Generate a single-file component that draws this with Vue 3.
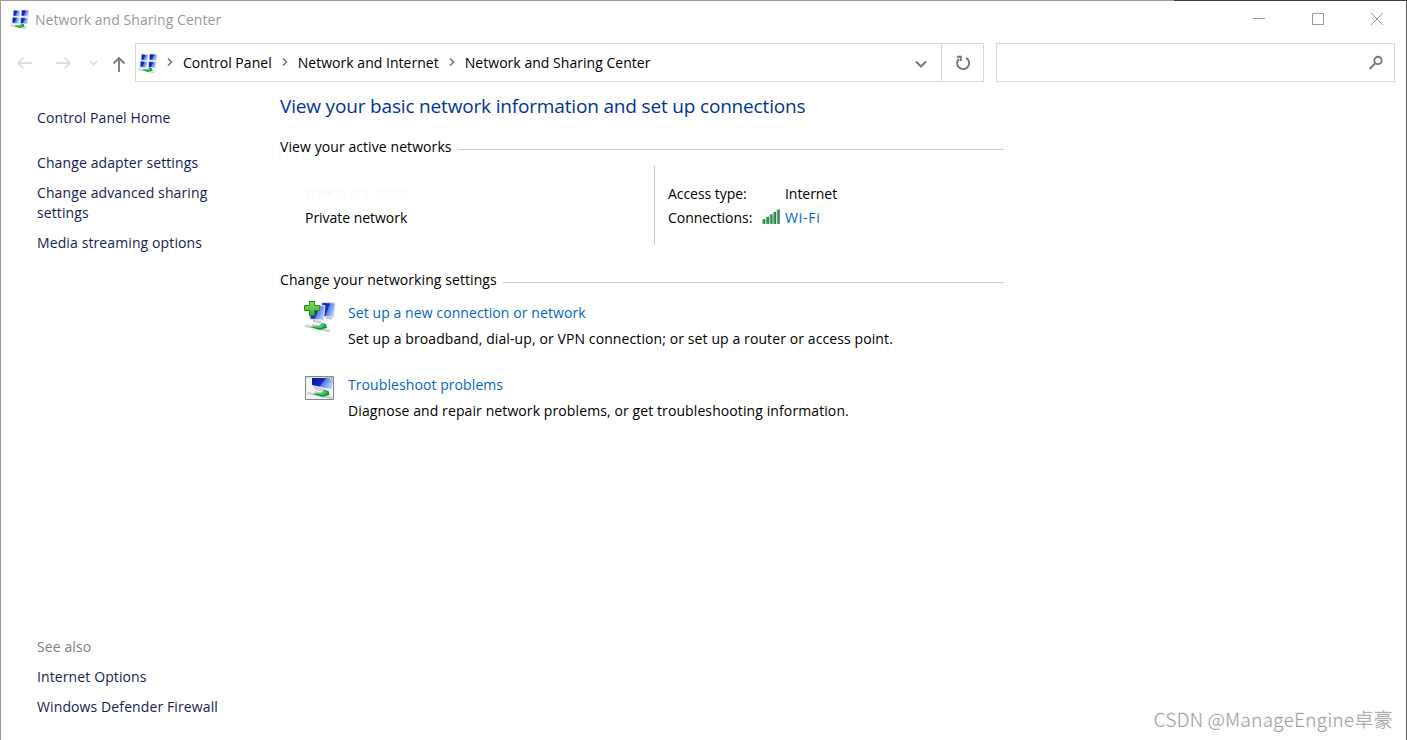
<template>
  <div class="window">
    <div class="backdrop-edge"></div>
    <header class="titlebar">
      <svg class="app-icon" viewBox="0 0 20 20"><use href="#network" /></svg>
      <span class="title">Network and Sharing Center</span>
      <div class="controls">
        <svg viewBox="0 0 14 14"><path d="M1 6.5h12" /></svg>
        <svg viewBox="0 0 14 14"><path d="M1.5 1.5h11v11h-11z" /></svg>
        <svg viewBox="0 0 14 14"><path d="M1 1l12 12M13 1L1 13" /></svg>
      </div>
    </header>

    <nav class="toolbar">
      <svg class="nav-icons" viewBox="0 0 116 20">
        <path d="M6 10h14M11.500 4.500L6 10l5.500 5.500M44 10h14M52.500 4.500L58 10l-5.500 5.500" />
        <path d="M78 8l3.500 3.500L85 8" />
        <path class="up" d="M107 19V5M101.500 10.500L107 5l5.500 5.500" />
      </svg>
      <div class="address">
        <svg class="app-icon" viewBox="0 0 20 20"><use href="#network" /></svg>
        <template v-for="crumb in crumbs" :key="crumb">
          <svg class="chevron" viewBox="0 0 8 10"><path d="M2 1.500L5.500 5 2 8.500" /></svg>
          <span class="crumb">{{ crumb }}</span>
        </template>
        <svg class="dropdown" viewBox="0 0 12 8"><path d="M1 1.500l5 5 5-5" /></svg>
        <div class="refresh">
          <svg viewBox="0 0 16 16"><path d="M11 2.800A6 6 0 1 1 3.800 4M2 1.700H5.800V6" /></svg>
        </div>
      </div>
      <div class="search">
        <svg viewBox="0 0 16 16"><circle cx="10" cy="5.500" r="3.700" /><path d="M7.300 8.300L1.500 14" /></svg>
      </div>
    </nav>

    <div class="content">
      <aside class="sidebar">
        <a class="home">Control Panel Home</a>
        <a v-for="task in tasks" :key="task">{{ task }}</a>
        <span class="see-also">See also</span>
        <a v-for="link in related" :key="link">{{ link }}</a>
      </aside>

      <main>
        <h1>View your basic network information and set up connections</h1>
        <h2><span>View your active networks</span></h2>
        <section class="network">
          <div class="network-name">
            <b>OPPO A5 2020</b>
            <span>Private network</span>
          </div>
          <dl>
            <dt>Access type:</dt>
            <dd>Internet</dd>
            <dt>Connections:</dt>
            <dd>
              <svg class="signal" viewBox="0 0 18 15">
                <rect v-for="n in 5" :key="n" :x="(n - 1) * 3.6 + 0.3" :y="12.5 - n * 2.4" width="3" :height="2.4 + n * 2.4" fill="url(#bars)" />
              </svg>
              <a class="wifi">Wi-Fi</a>
            </dd>
          </dl>
        </section>

        <h2><span>Change your networking settings</span></h2>
        <section v-for="item in settings" :key="item.icon" class="setting">
          <svg viewBox="0 0 32 32"><use :href="item.icon" /></svg>
          <div>
            <a>{{ item.title }}</a>
            <p>{{ item.text }}</p>
          </div>
        </section>
      </main>
    </div>

    <div class="watermark">CSDN @ManageEngine卓豪</div>

    <!-- shared artwork -->
    <svg class="defs">
      <defs>
        <linearGradient id="screen" x1="0" y1="0" x2="1" y2=".4">
          <stop offset="0" stop-color="#0b1490" />
          <stop offset=".55" stop-color="#1a2cc8" />
          <stop offset=".62" stop-color="#5c83e6" />
          <stop offset="1" stop-color="#a9c9ff" />
        </linearGradient>
        <linearGradient id="bars">
          <stop offset="0" stop-color="#7bbd94" />
          <stop offset="1" stop-color="#126432" />
        </linearGradient>
        <linearGradient id="plus" x1="0" y1="0" x2="0" y2="1">
          <stop offset="0" stop-color="#8ddf6c" />
          <stop offset="1" stop-color="#30ad20" />
        </linearGradient>
        <g id="cable">
          <path d="M1 2l7 1 12 3 6 1" fill="none" stroke="#c5c9cd" stroke-width="4" />
          <path d="M1 1l7 1M20 5l6 1" fill="none" stroke="#f6f7f8" stroke-width="2" />
          <path d="M6 4l9-1 3-3 4 1 1 4-4 1-3 1z" fill="#129a42" />
          <path d="M9 4l6-1 3-2 3 1-4 3z" fill="#3dd06c" />
        </g>
      </defs>
      <symbol id="network" viewBox="0 0 20 20">
        <g stroke="#dce4f6" stroke-width=".6">
          <path d="M3.500 1l6.700.7-.8 6L3 7z" fill="url(#screen)" />
          <path d="M11.500 1l7.500.2-.7 6.200-7.100-.4z" fill="url(#screen)" />
          <path d="M2.500 8l6.900.8-.8 6-6.600-.9z" fill="url(#screen)" />
          <path d="M10.800 8.500l7.200.5-.7 6-6.900-.7z" fill="url(#screen)" />
        </g>
        <use href="#cable" transform="translate(0 14.500) scale(.63)" />
      </symbol>
      <symbol id="connect" viewBox="0 0 32 32">
        <path d="M18 2.500l13 .5-1.500 14-12.500-.5z" fill="url(#screen)" stroke="#d5dae3" />
        <path d="M6 6l15-.5-1.500 14.500L6 19z" fill="url(#screen)" stroke="#d5dae3" />
        <path d="M9 20l8 1v2l-8-1zM22 17l6 .5v2l-6-.5z" fill="#bcc4d0" />
        <use href="#cable" transform="translate(0 23)" />
        <path d="M5.500 1.500h5v4h5v5h-5v5h-5v-5h-5v-5h5z" fill="url(#plus)" stroke="#28911c" />
      </symbol>
      <symbol id="troubleshoot" viewBox="0 0 32 32">
        <path d="M1.500 4.500h28v23h-28z" fill="#f3f4f6" stroke="#858990" />
        <path d="M2 5h27v2H2z" fill="#dfe2e6" />
        <path d="M8 6h14l7 2-1 8-2 1-18-4z" fill="url(#screen)" />
        <path d="M9 14l13 3v3l-11-2z" fill="#c9cfd8" />
        <path d="M22 6h1.500M24.500 6H26M27 6h1.500" stroke="#666" />
        <use href="#cable" transform="translate(2.500 18)" />
      </symbol>
    </svg>
  </div>
</template>

<script setup>
const crumbs = ["Control Panel", "Network and Internet", "Network and Sharing Center"];
const tasks = ["Change adapter settings", "Change advanced sharing settings", "Media streaming options"];
const related = ["Internet Options", "Windows Defender Firewall"];

const settings = [
  {
    icon: "#connect",
    title: "Set up a new connection or network",
    text: "Set up a broadband, dial-up, or VPN connection; or set up a router or access point."
  },
  {
    icon: "#troubleshoot",
    title: "Troubleshoot problems",
    text: "Diagnose and repair network problems, or get troubleshooting information."
  }
];
</script>

<style>
body {
  background: white;
  overflow: hidden;
}
</style>

<style scoped>
.window {
  position: relative;
  box-sizing: border-box;
  width: 1407px;
  height: 740px;
  display: flex;
  flex-direction: column;
  border: 1px solid #9b9b9b;
  border-right-color: #55555a;
  border-bottom: none;
  color: black;
  font: 14px/20px "Open Sans", "Noto Sans", sans-serif;
  letter-spacing: 0.08px;
}

svg {
  flex: none;
  display: block;
  fill: none;
}

.backdrop-edge {
  position: absolute;
  top: -1px;
  right: -1px;
  width: 233px;
  height: 1px;
  background: #3f3b45;
}

.titlebar {
  display: flex;
  align-items: center;
  height: 36px;
  padding-left: 9px;
  color: #999;
}

.app-icon {
  width: 20px;
  height: 20px;
}

.title {
  margin: 2px 0 0 5px;
  letter-spacing: 0.05px;
}

.controls {
  display: flex;
  gap: 45px;
  margin-left: auto;
  padding-right: 22px;
}

.controls svg {
  width: 14px;
  height: 14px;
  stroke: #999;
}

.toolbar {
  display: flex;
  height: 39px;
  margin-top: 6px;
}

.nav-icons {
  width: 116px;
  height: 20px;
  margin: 10px 7px 0 11px;
}

.nav-icons path {
  stroke: #d8d8d8;
  stroke-width: 1.4;
}

.nav-icons .up {
  stroke: #777;
  stroke-width: 1.8;
}

.address {
  box-sizing: border-box;
  display: flex;
  align-items: center;
  width: 849px;
  padding-left: 2px;
  border: 1px solid #d9d9d9;
}

.chevron {
  width: 8px;
  height: 10px;
  margin: 0 9px 2px;
  stroke: #777;
  stroke-width: 1.6;
}

.app-icon + .chevron {
  margin-left: 8px;
}

.crumb {
  letter-spacing: 0.03px;
}

.dropdown {
  width: 12px;
  height: 8px;
  margin: 2px 14px 0 auto;
  stroke: #777;
  stroke-width: 2;
}

.refresh {
  display: flex;
  align-items: center;
  justify-content: center;
  width: 41px;
  height: 100%;
  border-left: 1px solid #d9d9d9;
}

.refresh svg,
.search svg {
  width: 16px;
  height: 16px;
  stroke: #777;
  stroke-width: 1.9;
}

.search {
  box-sizing: border-box;
  display: flex;
  align-items: center;
  justify-content: flex-end;
  width: 399px;
  margin-left: 12px;
  padding-right: 10px;
  border: 1px solid #d9d9d9;
}

.content {
  display: flex;
  flex: 1;
}

.sidebar {
  display: flex;
  flex-direction: column;
  gap: 10px;
  box-sizing: border-box;
  width: 243px;
  padding: 26px 20px 23px 36px;
  color: #151c55;
  letter-spacing: 0.11px;
}

.home {
  margin-bottom: 15px;
}

.see-also {
  margin-top: auto;
  color: #808080;
}

main {
  width: 724px;
  padding: 11px 0 0 36px;
}

h1 {
  margin: 0 0 18px;
  color: #003399;
  font-size: 19px;
  font-weight: normal;
  line-height: 26px;
  letter-spacing: -0.17px;
  white-space: nowrap;
}

h2 {
  display: flex;
  align-items: center;
  margin: 0;
  font-size: 14px;
  font-weight: normal;
  line-height: 20px;
}

h2::after {
  content: "";
  flex: 1;
  height: 1px;
  margin: 5px 0 0 6px;
  background: #c9c9c9;
}

.network {
  display: flex;
  height: 80px;
  margin: 8px 0 25px;
}

.network-name {
  display: flex;
  flex-direction: column;
  gap: 4px;
  box-sizing: border-box;
  width: 374px;
  padding: 19px 0 0 25px;
  letter-spacing: -0.03px;
}

.network-name b {
  color: #fbfbfb;
  letter-spacing: 0.5px;
}

dl {
  display: grid;
  grid-template-columns: 94px 1fr;
  grid-template-rows: 20px 20px;
  row-gap: 4px;
  margin: 0;
  padding: 19px 0 0 13px;
  border-left: 1px solid #c9c9c9;
  letter-spacing: -0.05px;
}

dd {
  display: flex;
  margin: 0 0 0 23px;
}

.signal {
  width: 18px;
  height: 15px;
  margin: 1px 5px 0 -23px;
}

.wifi {
  letter-spacing: 0.75px;
}

main a {
  color: #0066cc;
}

.setting {
  display: flex;
  margin: 10px 0 0 24px;
  height: 62px;
}

.setting svg {
  width: 32px;
  height: 32px;
}

.setting div {
  margin: 3px 0 0 12px;
  white-space: nowrap;
}

.setting p {
  margin: 6px 0 0;
  letter-spacing: 0.1px;
}

.watermark {
  position: absolute;
  right: 13px;
  bottom: 8px;
  color: #a0a0a0;
  font: 300 19px/26px "Noto Sans CJK SC", sans-serif;
  letter-spacing: 0.25px;
  text-shadow: -1px -1px 0 #eee;
}

.defs {
  position: absolute;
  width: 0;
  height: 0;
}
</style>
